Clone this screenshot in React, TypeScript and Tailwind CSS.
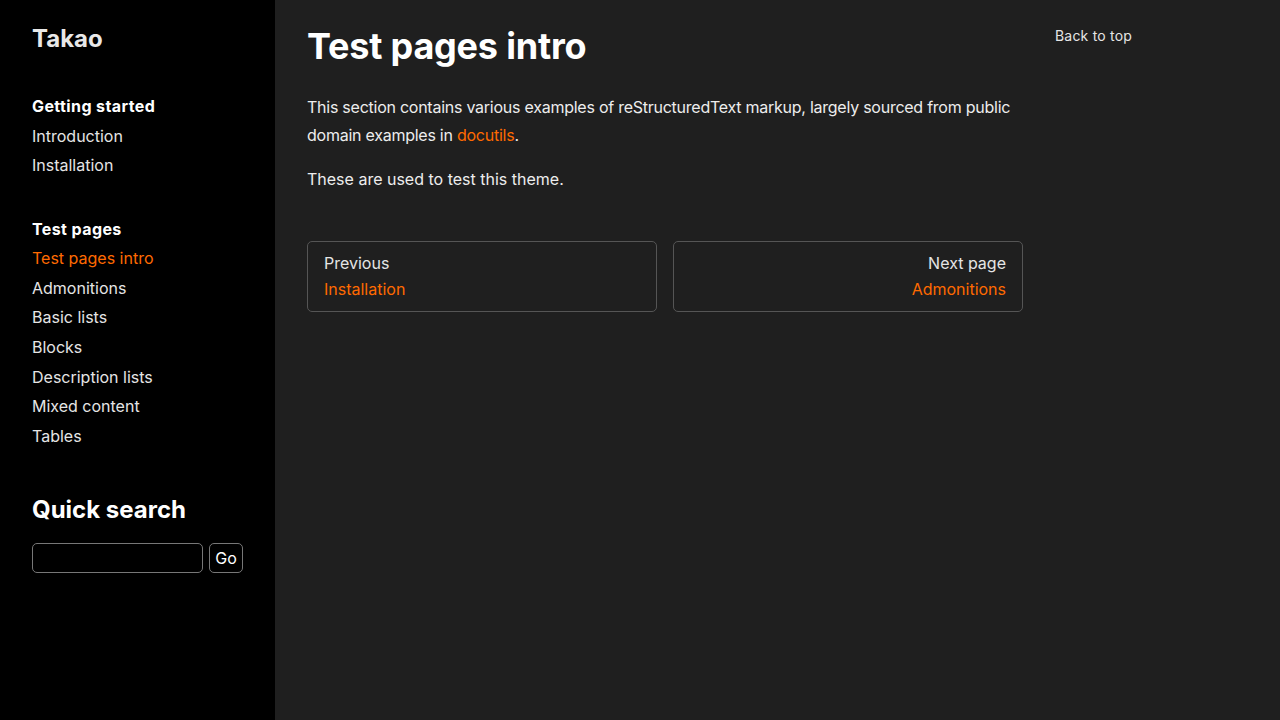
const nav = [
  {
    title: 'Getting started',
    items: [
      { label: 'Introduction' },
      { label: 'Installation' },
    ],
  },
  {
    title: 'Test pages',
    items: [
      { label: 'Test pages intro', active: true },
      { label: 'Admonitions' },
      { label: 'Basic lists' },
      { label: 'Blocks' },
      { label: 'Description lists' },
      { label: 'Mixed content' },
      { label: 'Tables' },
    ],
  },
];

export default function App() {
  return (
    <div className="flex min-h-[720px] bg-[#1f1f1f] text-[#ededed] font-['Inter','Liberation_Sans',sans-serif]">
      <aside className="w-[275px] shrink-0 bg-black px-8 pt-[23px]">
        <div className="text-2xl font-bold leading-8 text-[#e8e8e8]">Takao</div>

        {nav.map((section, i) => (
          <nav key={section.title} className={i === 0 ? 'mt-[37px]' : 'mt-[34px]'}>
            <div className="text-base font-bold tracking-[0.4px] leading-[29.5px] text-white">{section.title}</div>
            <ul>
              {section.items.map((item) => (
                <li
                  key={item.label}
                  className={`text-base leading-[29.6px] ${item.active ? 'text-[#ff6a00]' : 'text-[#e5e5e5]'}`}
                >
                  {item.label}
                </li>
              ))}
            </ul>
          </nav>
        ))}

        <h3 className="mt-[43px] text-2xl font-bold leading-8 text-white">Quick search</h3>
        <div className="mt-[17px] flex gap-1.5">
          <input
            type="text"
            className="h-[30px] w-[171px] rounded-[5px] border border-[#777] bg-black px-2 text-base text-white outline-none"
          />
          <button className="h-[30px] w-[34px] rounded-[5px] border border-[#777] bg-black text-base text-white">
            Go
          </button>
        </div>
      </aside>

      <main className="flex flex-1 gap-8 px-8 pt-[20px]">
        <article className="w-[716px] shrink-0">
          <h1 className="text-[36px] font-bold tracking-[-0.2px] leading-[52px] text-white">Test pages intro</h1>
          <p className="mt-[21px] text-base tracking-[-0.25px] leading-[28px]">
            This section contains various examples of reStructuredText markup, largely sourced from public
            domain examples in <a className="text-[#ff6a00]">docutils</a>.
          </p>
          <p className="mt-[16px] text-base leading-[28px]">These are used to test this theme.</p>

          <div className="mt-[48px] grid grid-cols-2 gap-4">
            <div className="h-[71px] rounded-[5px] border border-[#555] px-4 pt-[8px]">
              <div className="text-base leading-[26px] text-[#e5e5e5]">Previous</div>
              <div className="text-base leading-[26px] text-[#ff6a00]">Installation</div>
            </div>
            <div className="h-[71px] rounded-[5px] border border-[#555] px-4 pt-[8px] text-right">
              <div className="text-base leading-[26px] text-[#e5e5e5]">Next page</div>
              <div className="text-base leading-[26px] text-[#ff6a00]">Admonitions</div>
            </div>
          </div>
        </article>

        <div className="pt-[6px] text-sm tracking-[0.2px] leading-5 text-[#e5e5e5]">Back to top</div>
      </main>
    </div>
  );
}
